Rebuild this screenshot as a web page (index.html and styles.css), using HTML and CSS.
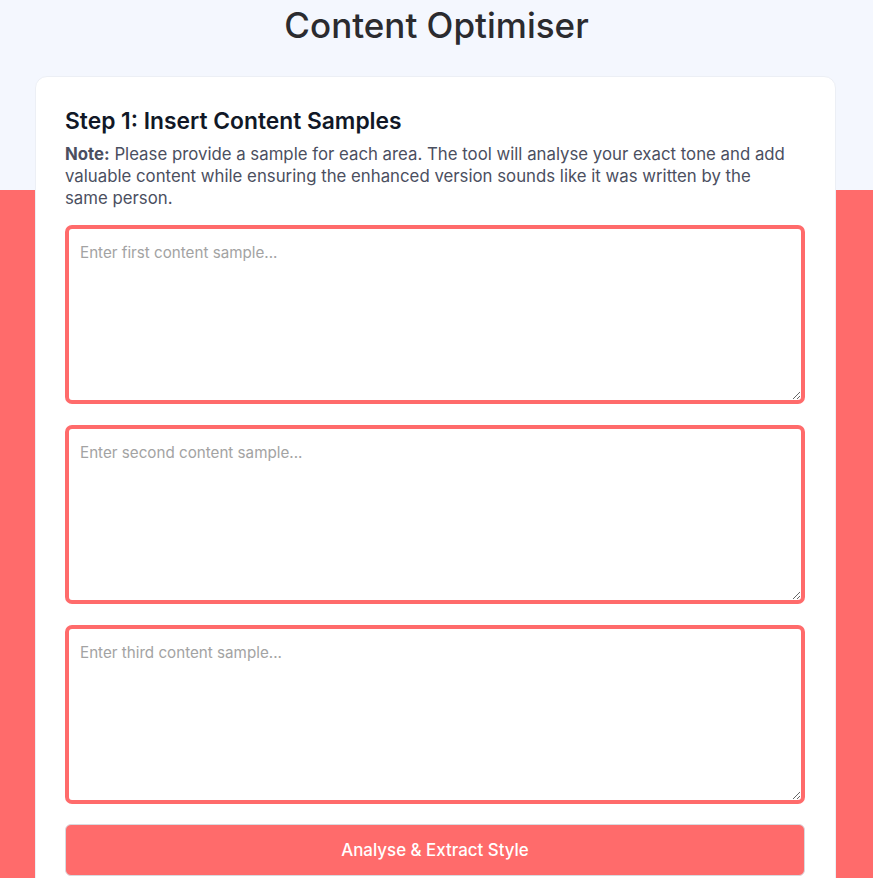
FILE: index.html
```html
<!DOCTYPE html>
<html lang="en">
<head>
<meta charset="utf-8">
<title>Content Optimiser</title>
<link rel="stylesheet" href="styles.css">
</head>
<body>
<h1 class="title">Content Optimiser</h1>
<main class="card">
  <h2 class="step-title">Step 1: Insert Content Samples</h2>
  <p class="note"><strong>Note:</strong> Please provide a sample for each area. The tool will analyse your exact tone and add valuable content while ensuring the enhanced version sounds like it was written by the same person.</p>
  <div class="samples">
    <textarea class="sample" placeholder="Enter first content sample..."></textarea>
    <textarea class="sample" placeholder="Enter second content sample..."></textarea>
    <textarea class="sample" placeholder="Enter third content sample..."></textarea>
    <button class="analyse-btn" type="button">Analyse &amp; Extract Style</button>
  </div>
</main>
</body>
</html>
```
FILE: styles.css
```css
html, body {
  margin: 0;
  padding: 0;
}
body {
  font-family: Inter, "Noto Sans", sans-serif;
  background: linear-gradient(to bottom, #f4f7fe 0, #f4f7fe 190px, #ff6b6b 190px, #ff6b6b 100%);
  min-height: 878px;
  overflow: hidden;
}
.title {
  margin: 0;
  padding-top: 2px;
  height: 74px;
  line-height: 46px;
  text-align: center;
  font-size: 35px;
  font-weight: 500;
  color: #2b2b2f;
}
.card {
  box-sizing: border-box;
  width: 801px;
  margin: 0 0 0 35px;
  background: #ffffff;
  border: 1px solid #eceff5;
  border-radius: 12px;
  padding: 29px 30px 30px 29px;
}
.step-title {
  margin: 0;
  font-size: 22.8px;
  line-height: 30px;
  font-weight: 600;
  color: #111827;
}
.note {
  max-width: 726px;
  margin: 7px 0 16px;
  font-size: 16.8px;
  line-height: 22px;
  color: #4b4f5f;
}
.note strong {
  font-weight: 700;
}
.samples {
  display: flex;
  flex-direction: column;
  gap: 21px;
}
.sample {
  box-sizing: border-box;
  display: block;
  width: 100%;
  height: 179px;
  border: 4px solid #ff6b6b;
  border-radius: 7px;
  padding: 14px 11px 12px;
  font-family: Inter, "Noto Sans", sans-serif;
  font-size: 15.2px;
  line-height: 20px;
  color: #333;
  background: #fff;
  resize: vertical;
  outline: none;
}
.sample::placeholder {
  color: #a3a3a3;
}
.analyse-btn {
  box-sizing: border-box;
  display: block;
  width: 100%;
  height: 52px;
  margin-top: -1px;
  background: #ff6b6b;
  border: 1px solid #d9d9de;
  border-radius: 6px;
  color: #ffffff;
  font-family: Inter, "Noto Sans", sans-serif;
  font-size: 16.9px;
  font-weight: 500;
  cursor: pointer;
}
```
